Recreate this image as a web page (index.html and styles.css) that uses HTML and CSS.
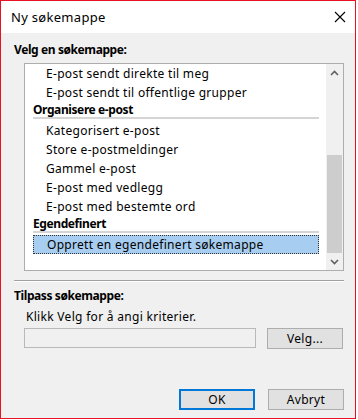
FILE: index.html
```html
<!DOCTYPE html>
<html lang="no">
<head>
<meta charset="utf-8">
<link rel="stylesheet" href="styles.css">
</head>
<body>
<div class="window">
  <div class="titlebar">
    <span class="title">Ny søkemappe</span>
    <span class="close">
      <svg width="12" height="12" viewBox="0 0 12 12"><path d="M1 1 L11 11 M11 1 L1 11" stroke="#000" stroke-width="1.1" fill="none"/></svg>
    </span>
  </div>
  <div class="content">
    <div class="label bold">Velg en søkemappe:</div>
    <div class="listbox">
      <div class="items">
        <div class="item">E-post sendt direkte til meg</div>
        <div class="item">E-post sendt til offentlige grupper</div>
        <div class="group">Organisere e-post</div>
        <div class="item">Kategorisert e-post</div>
        <div class="item">Store e-postmeldinger</div>
        <div class="item">Gammel e-post</div>
        <div class="item">E-post med vedlegg</div>
        <div class="item">E-post med bestemte ord</div>
        <div class="group">Egendefinert</div>
        <div class="item selected">Opprett en egendefinert søkemappe</div>
      </div>
      <div class="scrollbar">
        <div class="arrow"><svg width="9" height="6" viewBox="0 0 9 6"><path d="M1 5 L4.5 1.5 L8 5" stroke="#606060" stroke-width="1.6" fill="none"/></svg></div>
        <div class="track"><div class="thumb"></div></div>
        <div class="arrow"><svg width="9" height="6" viewBox="0 0 9 6"><path d="M1 1 L4.5 4.5 L8 1" stroke="#606060" stroke-width="1.6" fill="none"/></svg></div>
      </div>
    </div>
    <div class="divider"></div>
    <div class="label bold section">Tilpass søkemappe:</div>
    <div class="hint">Klikk Velg for å angi kriterier.</div>
    <div class="pickrow">
      <div class="field"></div>
      <div class="btn">Velg...</div>
    </div>
    <div class="footer">
      <div class="btn default">OK</div>
      <div class="btn">Avbryt</div>
    </div>
  </div>
</div>
</body>
</html>
```
FILE: styles.css
```css
* { box-sizing: border-box; }
html, body { margin: 0; padding: 0; }
body {
  font-family: "Segoe UI", "Noto Sans", "Open Sans", sans-serif;
  font-size: 12px;
  letter-spacing: 0.3px;
  color: #000;
  background: #fff;
}
.window {
  width: 356px;
  height: 419px;
  border: 1px solid #e81123;
  display: flex;
  flex-direction: column;
}
.titlebar {
  height: 32px;
  background: #fff;
  display: flex;
  align-items: center;
  justify-content: space-between;
  padding: 0 7px 0 10px;
}
.title { font-size: 13px; }
.close { display: flex; width: 16px; justify-content: center; }
.content {
  flex: 1;
  background: #f0f0f0;
  padding: 9px 11px 0 13px;
  display: flex;
  flex-direction: column;
}
.label { line-height: 16px; }
.bold { font-weight: bold; font-size: 12px; letter-spacing: -0.4px; }
.section { margin-top: 6px; }
.listbox {
  margin: 5px 0 0 10px;
  height: 208px;
  border: 1px solid #adadad;
  background: #fff;
  display: flex;
}
.items { flex: 1; padding: 0 7px 0 8px; }
.item {
  height: 19px;
  line-height: 19px;
  padding-left: 13px;
  white-space: nowrap;
}
.group {
  font-weight: bold;
  font-size: 12px;
  letter-spacing: -0.4px;
  height: 17px;
  line-height: 15px;
  border-bottom: 2px solid #d5d5d5;
  margin-bottom: 2px;
}
.selected {
  background: #a7cdf0;
  border: 1px dotted #333;
  line-height: 17px;
}
.scrollbar {
  width: 17px;
  background: #f0f0f0;
  display: flex;
  flex-direction: column;
}
.arrow { height: 17px; display: flex; align-items: center; justify-content: center; }
.track { flex: 1; display: flex; flex-direction: column; justify-content: flex-end; }
.thumb { height: 98px; background: #cdcdcd; margin: 0 1px; }
.divider {
  height: 2px;
  border-top: 1px solid #a0a0a0;
  border-bottom: 1px solid #fff;
  margin: 9px 0 0 0;
}
.hint { padding-left: 12px; line-height: 16px; margin-top: 5px; }
.pickrow {
  display: flex;
  gap: 11px;
  margin: 3px 0 0 10px;
}
.field {
  width: 232px;
  height: 20px;
  border: 1px solid #b9b9b9;
  background: #f0f0f0;
}
.btn {
  width: 76px;
  height: 21px;
  border: 1px solid #adadad;
  background: #e1e1e1;
  display: flex;
  align-items: center;
  justify-content: center;
}
.default { border: 2px solid #0078d7; }
.footer {
  margin-top: auto;
  margin-bottom: 8px;
  display: flex;
  justify-content: flex-end;
  gap: 13px;
}
```
